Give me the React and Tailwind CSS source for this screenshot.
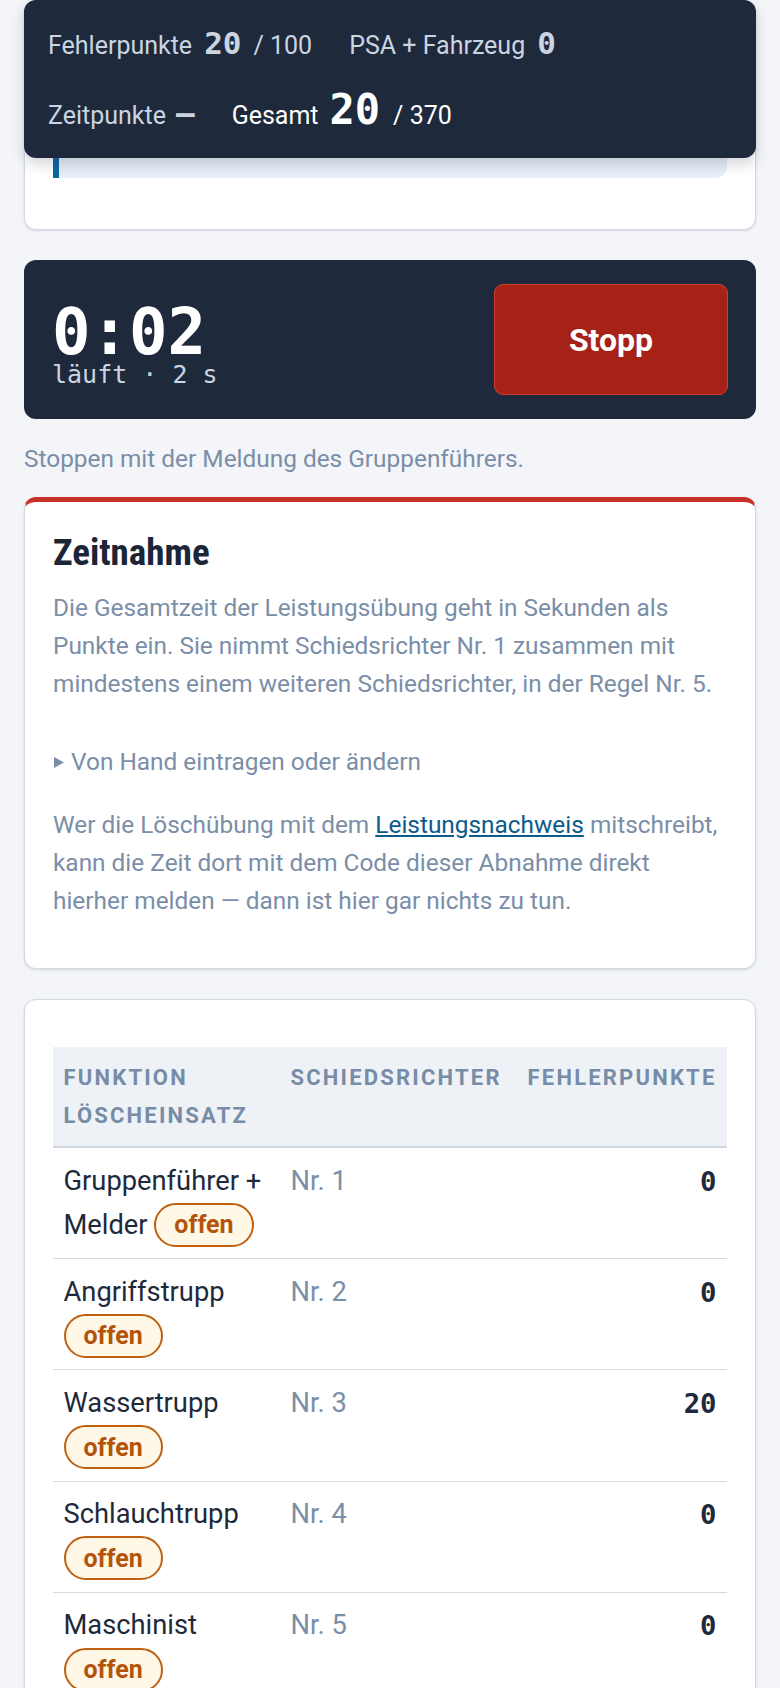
import React from 'react';

const rows = [
  { name: 'Gruppenführer + Melder', judge: 'Nr. 1', points: 0 },
  { name: 'Angriffstrupp', judge: 'Nr. 2', points: 0 },
  { name: 'Wassertrupp', judge: 'Nr. 3', points: 20 },
  { name: 'Schlauchtrupp', judge: 'Nr. 4', points: 0 },
  { name: 'Maschinist', judge: 'Nr. 5', points: 0 },
];

const Badge = () => (
  <span className="inline-flex h-[44px] items-center rounded-full border-2 border-[#c0600f] bg-[#fff8e7] px-[18px] align-baseline text-[25px] font-bold leading-none text-[#b4540a]">
    offen
  </span>
);

const App = () => {
  return (
    <div className="h-[1688px] overflow-hidden bg-[#f3f5f9] font-['Roboto',sans-serif] text-[24.4px] leading-[38px] text-[#1e293b]">
      <div className="relative flex flex-col px-[24px]">
        <div className="absolute left-[24px] right-[24px] top-0 z-10 h-[158px] rounded-[12px] bg-[#1e293b] pl-[24px] pt-[28px] text-[25px] shadow-[0_6px_14px_rgba(15,23,42,0.18)]">
          <div className="flex items-baseline leading-none text-[#cbd5e1]">
            <span>Fehlerpunkte</span>
            <span className="ml-[12px] font-['DejaVu_Sans_Mono',monospace] text-[31px] font-bold">20</span>
            <span className="ml-[12px]">/ 100</span>
            <span className="ml-[37px]">PSA + Fahrzeug</span>
            <span className="ml-[12px] font-['DejaVu_Sans_Mono',monospace] text-[31px] font-bold">0</span>
          </div>
          <div className="mt-[30px] flex items-baseline leading-none">
            <span className="text-[#cbd5e1]">Zeitpunkte</span>
            <span className="ml-[10px] font-['DejaVu_Sans_Mono',monospace] text-[31px] font-bold text-[#cbd5e1]">—</span>
            <span className="ml-[37px] text-white">Gesamt</span>
            <span className="ml-[11px] font-['DejaVu_Sans_Mono',monospace] text-[42px] font-bold text-white">20</span>
            <span className="ml-[13px] text-white">/ 370</span>
          </div>
        </div>

        {/* vorherige Karte, großteils verdeckt */}
        <section className="flex h-[230px] flex-col justify-end rounded-[12px] border-[1.5px] border-[#d3dae4] bg-white px-[28px] pb-[51px] shadow-sm">
          <div className="h-[160px] rounded-r-[12px] border-l-[6px] border-[#0c66a0] bg-[#e7eef7]" />
        </section>

        {/* Stoppuhr */}
        <div className="mt-[30px] flex items-center justify-between rounded-[12px] bg-[#1e293b] py-[24px] pl-[28px] pr-[28px]">
          <div className="mt-[10px] flex flex-col">
            <span className="font-['DejaVu_Sans_Mono',monospace] text-[64px] font-bold leading-[60px] text-white">0:02</span>
            <span className="font-['DejaVu_Sans_Mono',monospace] text-[25px] leading-[25px] text-[#cbd5e1]">läuft · 2 s</span>
          </div>
          <button className="h-[111px] w-[234px] rounded-[9px] border-[1.5px] border-[#d13c2f] bg-[#a62216] text-[32px] font-bold text-white">
            Stopp
          </button>
        </div>
        <p className="mt-[21px] text-[#7a8ea8]">Stoppen mit der Meldung des Gruppenführers.</p>

        {/* Zeitnahme */}
        <section className="mt-[19px] rounded-[12px] border-[1.5px] border-t-[5px] border-[#d3dae4] border-t-[#c8302a] bg-white px-[28px] pb-[48px] pt-[28px] shadow-sm">
          <h2 className="font-['Roboto_Condensed','Liberation_Sans_Narrow','DejaVu_Sans_Condensed',sans-serif] text-[37px] font-bold leading-[46px] text-[#1a2538]">
            Zeitnahme
          </h2>
          <p className="mt-[13px] text-[#7a8ea8]">
            Die Gesamtzeit der Leistungsübung geht in Sekunden als Punkte ein. Sie nimmt Schiedsrichter Nr. 1 zusammen mit
            mindestens einem weiteren Schiedsrichter, in der Regel Nr. 5.
          </p>
          <details className="mt-[40px] text-[#7a8ea8]">
            <summary className="flex cursor-pointer list-none items-center">
              <svg viewBox="0 0 10 11" className="ml-[1px] mr-[7px] h-[11px] w-[10px] fill-current">
                <path d="M0 0 L10 5.5 L0 11 Z" />
              </svg>
              <span>Von Hand eintragen oder ändern</span>
            </summary>
          </details>
          <p className="mt-[25px] text-[#7a8ea8]">
            Wer die Löschübung mit dem{' '}
            <a href="#" className="text-[#0b5b8c] underline">
              Leistungsnachweis
            </a>{' '}
            mitschreibt, kann die Zeit dort mit dem Code dieser Abnahme direkt hierher melden — dann ist hier gar nichts zu tun.
          </p>
        </section>

        {/* Fehlerpunkte je Trupp */}
        <section className="mt-[30px] rounded-[12px] border-[1.5px] border-[#d3dae4] bg-white px-[28px] pb-[28px] pt-[47px] shadow-sm">
          <table className="w-full table-fixed border-collapse">
            <colgroup>
              <col className="w-[227px]" />
              <col className="w-[233px]" />
              <col />
            </colgroup>
            <thead>
              <tr className="border-b-2 border-[#cfd7e1] bg-[#eef2f7] text-[22px] font-bold uppercase leading-[38px] tracking-[0.1em] text-[#778ca6]">
                <th className="px-[10.5px] py-[11.5px] text-left align-top font-bold">Funktion Löscheinsatz</th>
                <th className="px-[10.5px] py-[11.5px] text-left align-top font-bold">Schiedsrichter</th>
                <th className="px-[10.5px] py-[11.5px] text-right align-top font-bold">Fehlerpunkte</th>
              </tr>
            </thead>
            <tbody className="text-[27.3px] leading-[43.2px]">
              {rows.map((r) => (
                <tr key={r.judge} className="border-b border-[#d3dae4]">
                  <td className="px-[10.5px] py-[11.5px] align-top">
                    {r.name} <Badge />
                  </td>
                  <td className="px-[10.5px] py-[11.5px] align-top text-[#7a8ea8]">{r.judge}</td>
                  <td className="px-[10.5px] py-[11.5px] text-right align-top font-['DejaVu_Sans_Mono',monospace] font-bold">
                    {r.points}
                  </td>
                </tr>
              ))}
            </tbody>
          </table>
        </section>
      </div>
    </div>
  );
};

export default App;
